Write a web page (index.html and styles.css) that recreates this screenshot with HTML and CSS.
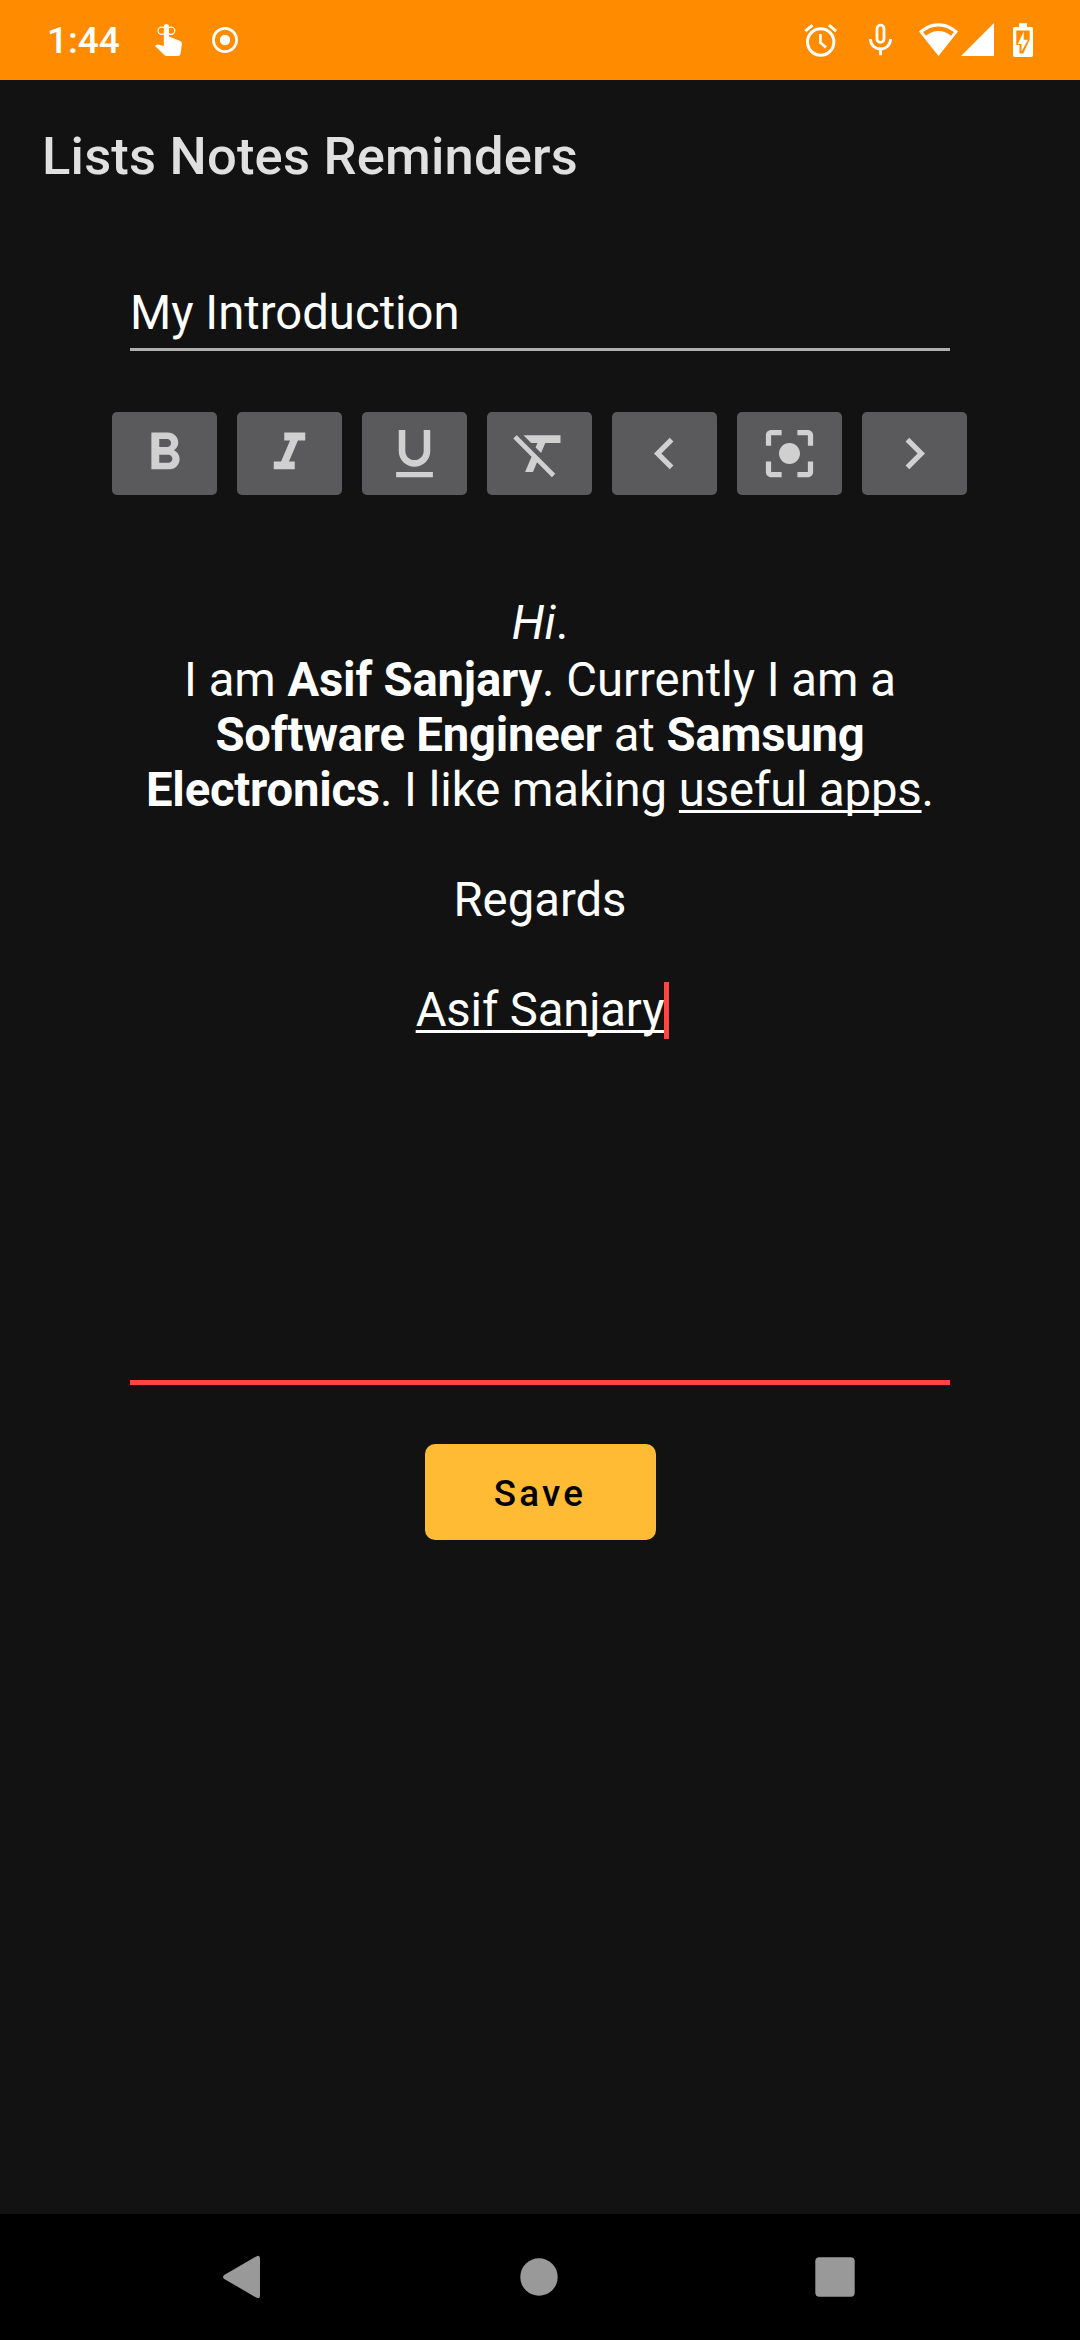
FILE: index.html
```html
<!DOCTYPE html>
<html lang="en">
<head>
<meta charset="utf-8">
<title>Lists Notes Reminders</title>
<link rel="stylesheet" href="styles.css">
</head>
<body>
<div class="screen">
  <header class="status-bar">
    <div class="status-left">
      <span class="clock">1:44</span>
      <svg class="touch-icon" width="30" height="36" viewBox="154 22 30 36">
        <g fill="none" stroke="#fff" stroke-width="1.2"><ellipse cx="161.8" cy="30.8" rx="3.8" ry="3.6"/><ellipse cx="171" cy="30.8" rx="3.8" ry="3.6"/></g>
        <path fill="#fff" d="M163.8 26.5a2.6 2.6 0 0 1 5.2 0V36.500l11.300 4.600q1.900.8 1.600 2.900L180.600 53.500q-.3 2.500-2.600 2.500H166.500q-1.300 0-2.200-.9L155 45.900l1.200-1q.7-.6 1.700-.3l5.900 1.300Z"/>
      </svg>
      <svg class="record-icon" width="28" height="28" viewBox="-14 -14 28 28">
        <circle r="11.600" fill="none" stroke="#fff" stroke-width="2.700"/><circle r="5.200" fill="#fff"/>
      </svg>
    </div>
    <div class="status-right">
      <svg class="alarm-icon" width="34" height="36" viewBox="804 22 34 36">
        <circle cx="820.700" cy="42" r="13.200" fill="none" stroke="#fff" stroke-width="3"/>
        <path fill="none" stroke="#fff" stroke-width="3" d="M805.300 31.200l7.200-6.100M836.100 31.200l-7.200-6.100"/>
        <path fill="none" stroke="#fff" stroke-width="2.600" d="M820.400 34v8.600l5.700 4.900"/>
      </svg>
      <svg class="mic-icon" width="24" height="34" viewBox="868 23 24 34">
        <rect x="877" y="25.200" width="7" height="17.200" rx="3.500" fill="none" stroke="#fff" stroke-width="2.800"/>
        <path fill="none" stroke="#fff" stroke-width="2.800" d="M870.400 39c0 6 4.500 10 10.100 10s10.100-4 10.100-10M880.500 49v6.300"/>
      </svg>
      <svg class="wifi-icon" width="40" height="34" viewBox="919 23 40 34">
        <path fill="#fff" d="M938.500 23.200c7.600 0 14.400 3.400 19.500 8.200L938.500 56 919 31.400c5.100-4.800 11.900-8.200 19.500-8.200Z"/>
        <path fill="#ff8b00" d="M938.500 26.400c6 0 11.200 2.400 15.400 5.600l-2.900 3.700c-3.600-2.900-7.800-4.600-12.500-4.600s-8.900 1.700-12.500 4.600l-2.900-3.700c4.200-3.200 9.400-5.600 15.400-5.600Z"/>
      </svg>
      <svg class="signal-icon" width="33" height="34" viewBox="961 23 33 34"><path fill="#fff" d="M994 23v33h-33Z"/></svg>
      <svg class="battery-icon" width="20" height="34" viewBox="1013 23 20 34">
        <path fill="#fff" d="M1019 23.300h8v3.700h4.300q1.700 0 1.700 1.700V55.200q0 1.800-1.700 1.800H1014.700q-1.700 0-1.700-1.800V28.700q0-1.700 1.700-1.700H1019Z"/>
        <path fill="#ff8b00" d="M1016.300 30.500h13.400v9l-6.500 14h-3.700v-8.500h-3.200Z"/>
        <path fill="#fff" d="M1023.700 31.500v8.200h4.300l-6.500 12v-7.800h-3.700Z"/>
      </svg>
    </div>
  </header>

  <main class="content">
    <h1 class="app-title">Lists Notes Reminders</h1>
    <div class="name-field">My Introduction</div>
    <div class="toolbar">
      <button class="tool" aria-label="Bold"><svg class="tool-icon" viewBox="0 0 24 24"><path d="M15.600 10.790c.97-.67 1.650-1.770 1.650-2.790 0-2.260-1.750-4-4-4H7v14h7.040c2.090 0 3.710-1.700 3.710-3.790 0-1.520-.86-2.820-2.150-3.420zM10 6.500h3c.83 0 1.500.67 1.500 1.500s-.67 1.500-1.500 1.500h-3v-3zm3.500 9H10v-3h3.500c.83 0 1.500.67 1.500 1.500s-.67 1.500-1.500 1.500z"/></svg></button>
      <button class="tool" aria-label="Italic"><svg class="tool-icon" viewBox="0 0 24 24"><path d="M10 4v3h2.210l-3.420 8H6v3h8v-3h-2.210l3.420-8H18V4z"/></svg></button>
      <button class="tool" aria-label="Underline"><svg class="tool-icon" viewBox="0 0 24 24"><path d="M12 17c3.310 0 6-2.690 6-6V3h-2.500v8c0 1.930-1.570 3.500-3.500 3.500S8.500 12.930 8.500 11V3H6v8c0 3.310 2.690 6 6 6zm-7 2v2h14v-2H5z"/></svg></button>
      <button class="tool" aria-label="Clear formatting"><svg class="tool-icon" viewBox="0 0 24 24"><path d="M3.270 5L2 6.270l6.970 6.970L6.500 19h3l1.570-3.660L16.730 21 18 19.730 3.550 5.270 3.270 5zM6 5v.18L8.820 8h2.400l-.72 1.680 2.100 2.100L14.210 8H20V5H6z"/></svg></button>
      <button class="tool" aria-label="Align left"><svg class="tool-icon" viewBox="0 0 24 24"><path d="M15.410 7.410L14 6l-6 6 6 6 1.410-1.410L10.830 12z"/></svg></button>
      <button class="tool" aria-label="Align center"><svg class="tool-icon" viewBox="0 0 24 24"><path d="M12 8c-2.210 0-4 1.790-4 4s1.790 4 4 4 4-1.790 4-4-1.790-4-4-4zm-7 7H3v4c0 1.100.9 2 2 2h4v-2H5v-4zM5 5h4V3H5c-1.100 0-2 .9-2 2v4h2V5zm14-2h-4v2h4v4h2V5c0-1.100-.9-2-2-2zm0 16h-4v2h4c1.100 0 2-.9 2-2v-4h-2v4z"/></svg></button>
      <button class="tool" aria-label="Align right"><svg class="tool-icon" viewBox="0 0 24 24"><path d="M10 6L8.590 7.410 13.170 12l-4.580 4.590L10 18l6-6z"/></svg></button>
    </div>
    <div class="editor">
      <p class="line first"><em>Hi</em>.</p>
      <p class="line">I am <b>Asif Sanjary</b>. Currently I am a</p>
      <p class="line"><b>Software Engineer</b> at <b>Samsung</b></p>
      <p class="line"><b>Electronics</b>. I like making <u>useful apps</u>.</p>
      <p class="line gap">Regards</p>
      <p class="line gap"><span class="caret-host"><u>Asif Sanjary</u><span class="caret"></span></span></p>
    </div>
    <button class="save">Save</button>
  </main>

  <nav class="nav-bar">
    <svg class="nav-icon" viewBox="0 0 48 48"><path d="M5.200 22.100 37.300 3.400q3.700-1.700 3.700 2V42.600q0 3.700-3.700 2L5.200 25.900q-2.400-1.900 0-3.800Z"/></svg>
    <svg class="nav-icon" viewBox="0 0 48 48"><circle cx="24" cy="24" r="18.700"/></svg>
    <svg class="nav-icon" viewBox="0 0 48 48"><rect x="4.300" y="4.300" width="39.400" height="39.400" rx="4"/></svg>
  </nav>
</div>
</body>
</html>
```
FILE: styles.css
```css
* { box-sizing: border-box; }
body { margin: 0; background: #121212; font-family: Roboto, sans-serif; color: #fff; }
svg { display: block; }
button { border: 0; padding: 0; font-family: inherit; }

.screen { display: flex; flex-direction: column; width: 1080px; height: 2340px; background: #121212; }

.status-bar { display: flex; justify-content: space-between; height: 80px; background: #ff8b00; }
.status-left { display: flex; align-items: flex-start; padding-left: 47px; }
.clock { width: 107px; padding-top: 19px; font-size: 37px; line-height: 44px; font-weight: 500; }
.touch-icon { margin-top: 22px; }
.record-icon { margin: 26px 0 0 27px; }
.status-right { display: flex; align-items: flex-start; padding: 23px 47px 0 0; }
.alarm-icon { margin: -1px 30px 0 0; }
.mic-icon { margin-right: 27px; }
.wifi-icon { margin-right: 2px; }
.signal-icon { margin-right: 19px; }

.content { display: flex; flex: 1; flex-direction: column; align-items: center; }
.app-title { align-self: stretch; margin: 36px 0 0; padding-left: 42px; font-size: 52.5px; line-height: 80px; font-weight: 500; letter-spacing: 0.2px; color: #e0e0e0; }
.name-field { width: 820px; height: 166px; margin-top: -11px; border-bottom: 3px solid #b0b0b0; font-size: 47.25px; line-height: 55px; padding-top: 101px; }

.toolbar { display: flex; gap: 20px; margin: 61px 0 0 -1px; }
.tool { display: flex; align-items: center; justify-content: center; width: 105px; height: 83px; border-radius: 5px; background: #5a5a5c; }
.tool-icon { width: 63px; height: 63px; fill: #d0d0d0; }

.editor { width: 820px; height: 890px; padding-top: 101px; border-bottom: 5px solid #ff4444; font-size: 47.25px; text-align: center; }
.line { margin: 0; line-height: 55px; white-space: nowrap; }
.first { padding-bottom: 2px; }
.gap { margin-top: 55px; }
b { letter-spacing: -0.22px; }
u { letter-spacing: -0.15px; text-decoration-thickness: 2.5px; text-decoration-skip-ink: none; text-underline-offset: 4px; }
.caret-host { position: relative; }
.caret { position: absolute; top: 0; right: -5px; width: 5px; height: 57px; background: #ff4444; }

.save { width: 231px; height: 96px; margin-top: 59px; padding-top: 2px; border-radius: 10px; background: #ffbb33; color: #000; font-size: 36.75px; font-weight: 500; letter-spacing: 3.28px; }

.nav-bar { display: flex; align-items: center; justify-content: space-between; height: 126px; padding: 0 221px 0 219px; background: #000; }
.nav-icon { width: 48px; height: 48px; fill: #999; }
```
